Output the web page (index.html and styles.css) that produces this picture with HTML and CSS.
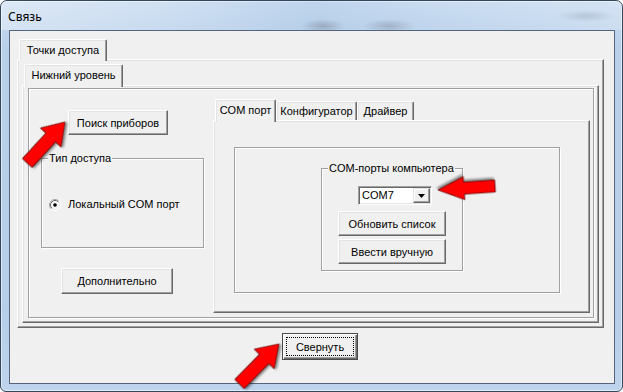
FILE: index.html
```html
<!DOCTYPE html>
<html lang="ru">
<head>
<meta charset="utf-8">
<title>Связь</title>
<link rel="stylesheet" href="styles.css">
</head>
<body>
<div class="window">
  <div class="titlebar"><span class="title">Связь</span></div>
  <div class="client">
    <div class="tabs outer-tabs"><div class="tab active tab-points">Точки доступа</div></div>
    <div class="page outer-page">
      <div class="tabs inner-tabs"><div class="tab active tab-lower">Нижний уровень</div></div>
      <div class="page inner-page">
        <div class="content">
          <div class="left-col">
            <div class="btn btn-search">Поиск приборов</div>
            <div class="group group-access">
              <span class="group-label">Тип доступа</span>
              <div class="radio-row">
                <svg class="radio" width="12" height="12" viewBox="0 0 12 12">
                  <circle cx="6" cy="6" r="5.5" fill="#fff" stroke="#ffffff"/>
                  <circle cx="6" cy="6" r="4.5" fill="#fff" stroke="#e3e3e3"/>
                  <path d="M2.11 9.89 A5.5 5.5 0 0 1 9.89 2.11" fill="none" stroke="#a0a0a0"/>
                  <path d="M2.82 9.18 A4.5 4.5 0 0 1 9.18 2.82" fill="none" stroke="#696969"/>
                  <circle cx="6" cy="6" r="3.6" fill="#f2f2f2"/>
                  <circle cx="6" cy="6" r="1.8" fill="#000"/>
                </svg>
                <span>Локальный COM порт</span>
              </div>
            </div>
            <div class="btn btn-more">Дополнительно</div>
          </div>
          <div class="com-wrap">
            <div class="tabs com-tabs">
              <div class="tab active tab-com">COM порт</div>
              <div class="tab tab-conf">Конфигуратор</div>
              <div class="tab tab-drv">Драйвер</div>
            </div>
            <div class="page com-page">
              <div class="bevel">
                <div class="group group-com">
                  <span class="group-label">COM-порты компьютера</span>
                  <div class="combo">
                    <span class="combo-text">COM7</span>
                    <span class="combo-btn">
                      <svg width="7" height="4" viewBox="0 0 7 4"><path d="M0 0H7L3.5 4Z" fill="#000"/></svg>
                    </span>
                  </div>
                  <div class="btn btn-com btn-refresh">Обновить список</div>
                  <div class="btn btn-com btn-manual">Ввести вручную</div>
                </div>
              </div>
            </div>
          </div>
        </div>
      </div>
    </div>
    <div class="footer">
      <div class="btn btn-default"><span class="focus">Свернуть</span></div>
    </div>
  </div>
  <svg class="arrows" width="623" height="392" viewBox="0 0 623 392">
    <polygon transform="translate(27.3 163) rotate(-47.4)" points="0,-6.6 34.7,-6.6 34.7,-14 55.7,0 34.7,14 34.7,6.6 0,6.6"/>
    <polygon transform="translate(495 186) rotate(176)" points="0,-6 31.1,-6 31.1,-11.5 57.1,0 31.1,11.5 31.1,6 0,6"/>
    <polygon transform="translate(239.5 384) rotate(-45.4)" points="0,-6.6 35.2,-6.6 35.2,-14 56.2,0 35.2,14 35.2,6.6 0,6.6"/>
  </svg>
</div>
</body>
</html>
```
FILE: styles.css
```css
* { box-sizing: border-box; margin: 0; padding: 0; }
html, body { width: 623px; height: 392px; overflow: hidden; }
body {
  font-family: "Liberation Sans", Arial, sans-serif;
  font-size: 11px;
  color: #000;
  background: #ffffff;
}

.window {
  position: relative;
  width: 623px;
  height: 392px;
  border: 1px solid #34465a;
  border-radius: 7px 7px 6px 6px;
  overflow: hidden;
  background: linear-gradient(180deg, #c9dcf1 0%, #b9d0ea 12%, #b6cee9 80%, #bed4ec 100%);
  box-shadow: inset 0 0 0 1px rgba(255, 255, 255, 0.55);
}

.titlebar {
  height: 29px;
  padding-left: 7px;
  display: flex;
  align-items: center;
  background:
    radial-gradient(ellipse 22px 7px at 322px 25px, rgba(90, 100, 115, 0.35), rgba(90, 100, 115, 0)),
    radial-gradient(ellipse 26px 7px at 388px 25px, rgba(90, 100, 115, 0.3), rgba(90, 100, 115, 0)),
    radial-gradient(ellipse 30px 6px at 585px 15px, rgba(90, 100, 115, 0.2), rgba(90, 100, 115, 0)),
    linear-gradient(90deg, rgba(255, 255, 255, 0.35) 0%, rgba(255, 255, 255, 0.15) 25%, rgba(160, 190, 225, 0.25) 50%, rgba(255, 255, 255, 0) 70%, rgba(255, 255, 255, 0.2) 100%);
}
.title {
  font-family: "Noto Sans", "Liberation Sans", sans-serif;
  font-size: 12px;
  color: #000;
  padding-top: 1px;
}

.client {
  margin-left: 8px;
  width: 606px;
  height: 354px;
  border: 1px solid #56667a;
  background: #f0f0f0;
}

/* tabs */
.tabs {
  display: flex;
  align-items: flex-end;
}
.tab {
  position: relative;
  z-index: 1;
  display: flex;
  align-items: center;
  justify-content: center;
  white-space: nowrap;
  background: #f0f0f0;
  border-top: 1px solid #ffffff;
  border-left: 1px solid #ffffff;
  border-right: 1px solid #696969;
  border-radius: 2px 2px 0 0;
  box-shadow: inset -1px 0 0 #a0a0a0, inset 1px 1px 0 #e3e3e3;
}
.tab.active {
  margin-bottom: -2px;
  padding-bottom: 2px;
}

.outer-tabs {
  height: 20px;
  margin: 8px 0 0 7px;
}
.tab-points {
  margin-left: 2px;
  width: 88px;
  height: 22px;
}

.inner-tabs {
  height: 21px;
}
.tab-lower {
  margin-left: 2px;
  width: 99px;
  height: 23px;
}

/* pages */
.page {
  background: #f0f0f0;
  border: 1px solid;
  border-color: #ffffff #696969 #696969 #ffffff;
  box-shadow: inset -1px -1px 0 #a0a0a0, inset 1px 1px 0 #e3e3e3;
}
.outer-page {
  margin-left: 7px;
  width: 587px;
  height: 269px;
  padding: 4px;
}
.inner-page {
  width: 577px;
  height: 238px;
  padding: 2px 4px 4px 5px;
}

.content {
  width: 566px;
  height: 230px;
  border: 1px solid #a0a0a0;
  box-shadow: 1px 1px 0 #ffffff, inset 1px 1px 0 #ffffff;
  display: grid;
  grid-template-columns: 184px 377px;
}

/* buttons */
.btn {
  display: flex;
  align-items: center;
  justify-content: center;
  white-space: nowrap;
  background: #f0f0f0;
  border: 1px solid;
  border-color: #ffffff #696969 #696969 #ffffff;
  box-shadow: inset -1px -1px 0 #a0a0a0, inset 1px 1px 0 #e3e3e3;
}

.left-col {
  display: flex;
  flex-direction: column;
  align-items: flex-start;
}
.btn-search {
  margin: 21px 0 0 39px;
  width: 100px;
  height: 25px;
}
.btn-more {
  margin: 20px 0 0 32px;
  width: 112px;
  height: 26px;
}

/* group boxes */
.group {
  border: 1px solid #a0a0a0;
  box-shadow: 1px 1px 0 #ffffff, inset 1px 1px 0 #ffffff;
}
.group-label {
  display: block;
  width: fit-content;
  margin: -7px 0 0 6px;
  padding: 0 1px;
  line-height: 13px;
  background: #f0f0f0;
  white-space: nowrap;
}
.group-access {
  margin: 23px 0 0 12px;
  width: 163px;
  height: 90px;
}
.radio-row {
  display: flex;
  align-items: center;
  gap: 7px;
  margin: 33px 0 0 7px;
  height: 13px;
  line-height: 13px;
}
.radio { display: block; flex: none; }

/* COM tab control */
.com-wrap {
  padding-top: 10px;
}
.com-tabs {
  height: 21px;
}
.tab-com {
  margin-left: 2px;
  width: 61px;
  height: 23px;
  padding-bottom: 4px;
}
.tab-conf {
  width: 81px;
  height: 19px;
}
.tab-drv {
  width: 57px;
  height: 19px;
}
.com-page {
  width: 377px;
  height: 193px;
  padding: 26px 0 0 20px;
}
.bevel {
  width: 326px;
  height: 146px;
  border: 1px solid #a0a0a0;
  box-shadow: 1px 1px 0 #ffffff, inset 1px 1px 0 #ffffff;
  padding: 20px 0 0 86px;
}
.group-com {
  width: 142px;
  height: 103px;
}

.combo {
  margin: 11px 0 0 36px;
  width: 74px;
  height: 19px;
  display: flex;
  padding: 1px;
  border: 1px solid;
  border-color: #a0a0a0 #ffffff #ffffff #a0a0a0;
  box-shadow: inset 1px 1px 0 #696969, inset -1px -1px 0 #e3e3e3;
  background: #ffffff;
}
.combo-text {
  flex: 1;
  padding-left: 2px;
  line-height: 15px;
}
.combo-btn {
  width: 17px;
  height: 15px;
  display: flex;
  align-items: center;
  justify-content: center;
  background: #f0f0f0;
  border: 1px solid;
  border-color: #e3e3e3 #696969 #696969 #e3e3e3;
  box-shadow: inset -1px -1px 0 #a0a0a0, inset 1px 1px 0 #ffffff;
}
.combo-btn svg { display: block; }

.btn-com {
  margin-left: 16px;
  width: 108px;
  height: 25px;
}
.btn-refresh { margin-top: 6px; }
.btn-manual { margin-top: 3px; }

/* footer */
.footer {
  padding: 5px 0 0 272px;
}
.btn-default {
  width: 76px;
  height: 27px;
  border: 1px solid #4a4a4a;
  box-shadow: inset 1px 1px 0 #ffffff, inset -1px -1px 0 #696969, inset -2px -2px 0 #a0a0a0;
  padding: 3px;
}
.focus {
  flex: 1;
  align-self: stretch;
  display: flex;
  align-items: center;
  justify-content: center;
  border: 1px dotted #000;
}

/* annotation arrows */
.arrows {
  position: absolute;
  left: -1px;
  top: -1px;
  pointer-events: none;
}
.arrows polygon {
  fill: #ff0000;
  stroke: #6a0000;
  stroke-width: 0.8;
  stroke-linejoin: miter;
  filter: drop-shadow(1px 2px 1px rgba(0, 0, 0, 0.45));
}
```
